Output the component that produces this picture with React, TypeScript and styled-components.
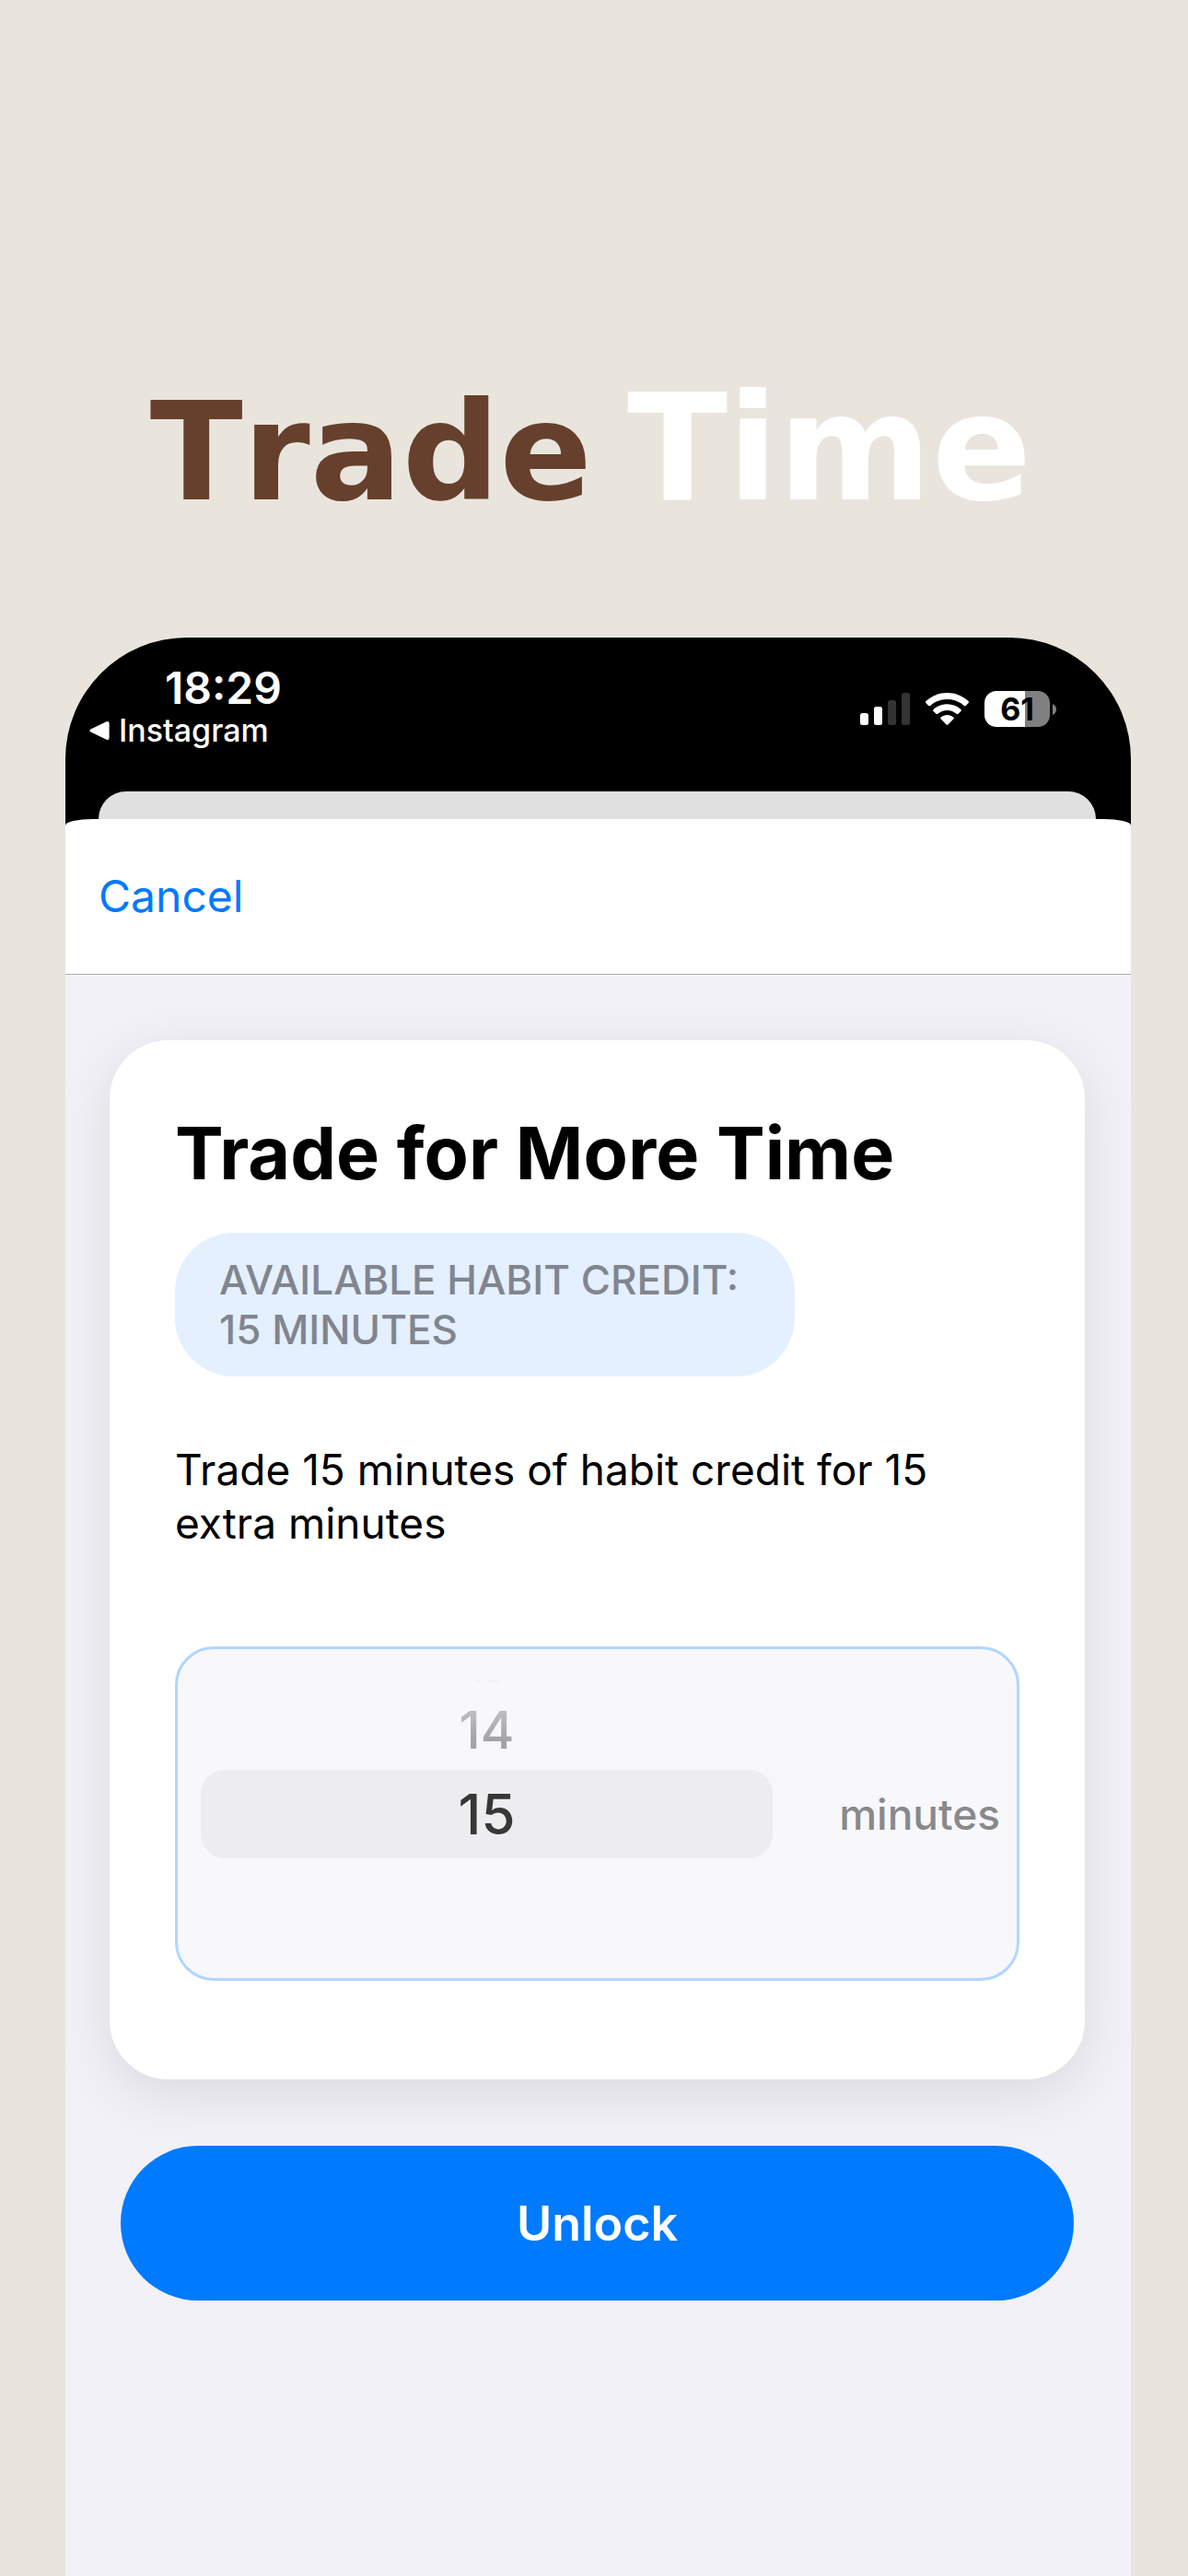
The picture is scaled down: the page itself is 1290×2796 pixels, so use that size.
import React, { useState } from 'react';
import styled, { createGlobalStyle } from 'styled-components';

const GlobalStyle = createGlobalStyle`
  *, *::before, *::after { box-sizing: border-box; }
  body { margin: 0; background: #e9e5dd; font-family: Inter, "Liberation Sans", sans-serif; }
  button, input { font: inherit; }
`;

const Page = styled.div`
  display: flex;
  flex-direction: column;
  min-height: 100vh;
  padding: 0 62px 0 71px;
  background: #e9e5dd;
`;

const Banner = styled.h1`
  display: flex;
  justify-content: center;
  align-items: baseline;
  gap: 38px;
  margin: 0;
  padding: 397px 16px 111px 0;
  font-family: "DejaVu Sans", Verdana, sans-serif;
  font-kerning: none;
  font-weight: 700;
  line-height: 180px;
`;

const BannerWord = styled.span<{ $color: string; $size: number }>`
  color: ${(p) => p.$color};
  font-size: ${(p) => p.$size}px;
`;

const Phone = styled.main`
  display: flex;
  flex-direction: column;
  flex: 1;
  overflow: hidden;
  border-radius: 132px 132px 0 0;
  background: #000;
`;

const StatusBar = styled.header`
  display: flex;
  justify-content: space-between;
  align-items: flex-start;
  height: 167px;
  padding: 27px 81px 0 26px;
  color: #fff;
`;

const Clock = styled.time`
  display: block;
  padding-left: 82px;
  font-size: 48px;
  font-weight: 600;
  line-height: 56px;
`;

const BackLink = styled.a`
  display: flex;
  align-items: center;
  gap: 10px;
  color: #fff;
  font-size: 34px;
  font-weight: 500;
  line-height: 36px;
  text-decoration: none;
`;

const StatusIcons = styled.div`
  display: flex;
  align-items: center;
  gap: 17px;
  height: 39px;
  margin-top: 31px;
`;

const BatteryWrap = styled.div`
  display: flex;
  align-items: center;
  gap: 3px;
`;

const BatteryBody = styled.span<{ $level: number }>`
  width: 71px;
  height: 39px;
  border-radius: 13px;
  background: linear-gradient(to right, #fff ${(p) => p.$level}%, #808080 ${(p) => p.$level}%);
  color: #000;
  font-size: 34px;
  font-weight: 700;
  line-height: 39px;
  text-align: center;
`;

const BackSheet = styled.div`
  height: 30px;
  margin: 0 38px 0 36px;
  border-radius: 30px 30px 0 0;
  background: #e0e0e0;
`;

const NavBar = styled.nav`
  display: flex;
  align-items: center;
  height: 169px;
  padding: 0 36px;
  border-bottom: 1px solid #a9a9ae;
  border-radius: 30px 30px 0 0 / 7px 7px 0 0;
  background: #fff;
`;

const CancelButton = styled.button`
  padding: 0;
  border: 0;
  background: none;
  color: #007aff;
  font-size: 48px;
  line-height: 60px;
  cursor: pointer;
`;

const Content = styled.section`
  display: flex;
  flex-direction: column;
  flex: 1;
  gap: 72px;
  padding: 71px 50px 72px 48px;
  background: #f2f1f7;
`;

const Card = styled.div`
  display: flex;
  flex-direction: column;
  align-items: flex-start;
  padding: 72px 71px 107px;
  border-radius: 64px;
  background: #fff;
  box-shadow: 0 15px 60px rgba(0, 0, 0, 0.1);
`;

const CardTitle = styled.h2`
  margin: 0 0 37px;
  color: #000;
  font-size: 79px;
  font-weight: 700;
  line-height: 100px;
`;

const CreditBadge = styled.p`
  max-width: 673px;
  margin: 0;
  padding: 24px 48px;
  border-radius: 64px;
  background: #e4f0ff;
  color: #81858f;
  font-size: 44px;
  font-weight: 500;
  line-height: 54px;
`;

const Summary = styled.p`
  margin: 72px 0 105px;
  color: #000;
  font-size: 46px;
  line-height: 58px;
`;

const Picker = styled.div`
  display: flex;
  align-items: center;
  align-self: stretch;
  gap: 72px;
  height: 363px;
  padding: 0 18px 0 25px;
  border: 3px solid #b0d6ff;
  border-radius: 42px;
  background: #f8f8fb;
`;

const Wheel = styled.div`
  display: grid;
  grid-template-rows: 1fr 96px 1fr;
  flex: 1;
  align-self: stretch;
  text-align: center;
`;

const WheelPast = styled.div`
  display: flex;
  flex-direction: column;
  justify-content: flex-end;
  gap: 16px;
  padding-bottom: 13px;
`;

const WheelOption = styled.label`
  display: flex;
  justify-content: center;
  align-items: center;
  font-weight: 500;
  cursor: pointer;
`;

const SelectedOption = styled(WheelOption)`
  border-radius: 26px;
  background: #ededef;
  color: #373738;
  font-size: 60px;
  line-height: 96px;
`;

const NearOption = styled(WheelOption)`
  background: linear-gradient(#bebec0 10px, #a4a4a6 40px) text;
  color: transparent;
  font-size: 56px;
  line-height: 60px;
`;

const FarOption = styled(WheelOption)`
  background: linear-gradient(#f8f8fb 30px, #ececef 35px) text;
  color: transparent;
  font-size: 40px;
  line-height: 40px;
`;

const WheelInput = styled.input`
  appearance: none;
  width: 0;
  height: 0;
  margin: 0;
  outline: none;
`;

const Unit = styled.span`
  color: #89898c;
  font-size: 46px;
  font-weight: 500;
  line-height: 58px;
`;

const UnlockButton = styled.button`
  height: 168px;
  margin: 0 12px;
  border: 0;
  border-radius: 84px;
  background: #007aff;
  color: #fff;
  font-size: 52px;
  font-weight: 600;
  cursor: pointer;
`;

const BackTriangle = () => (
  <svg width="22" height="22" viewBox="0 0 22 22" aria-hidden="true">
    <path d="M2 9.2 18.6 1.3Q21.4.3 21.6 3v16q-.2 2.700-3 1.700L2 12.800Q-1.300 11 2 9.200Z" fill="#fff" />
  </svg>
);

const SignalIcon = () => (
  <svg width="54" height="35" viewBox="0 0 54 35" role="img" aria-label="Signal">
    <rect x="0" y="22" width="9" height="13" rx="2.500" fill="#fff" />
    <rect x="15" y="15" width="9" height="20" rx="2.500" fill="#fff" />
    <rect x="30" y="8" width="9" height="27" rx="2.500" fill="#333" />
    <rect x="45" y="0" width="9" height="35" rx="2.500" fill="#333" />
  </svg>
);

const WifiIcon = () => (
  <svg width="47" height="35" viewBox="0 0 47 35" role="img" aria-label="Wi-Fi" fill="#fff">
    <path d="M23.500 0C32.500 0 40.500 3.400 46.500 9q1 1 .1 2l-2.800 2.900q-1 .9-2 0C36.900 9.400 30.500 6.900 23.500 6.900S10.100 9.400 5.200 13.900q-1 .9-2 0L.4 11q-.9-1 .1-2C6.500 3.400 14.500 0 23.500 0Z" />
    <path d="M23.500 12.200c5.700 0 10.900 2.100 14.900 5.700q1 1 0 2l-2.900 2.900q-.9.9-1.900 0c-2.700-2.400-6.200-3.800-10.100-3.800s-7.400 1.400-10.100 3.800q-1 .9-1.900 0l-2.900-2.900q-1-1 0-2c4-3.600 9.200-5.700 14.900-5.700Z" />
    <path d="M23.500 24.100c2.600 0 4.900.9 6.800 2.500q1 .9 0 1.900l-5.900 5.900q-.9.9-1.800 0l-5.900-5.900q-1-1 0-1.900c1.900-1.600 4.200-2.500 6.800-2.500Z" />
  </svg>
);

const BatteryNub = () => (
  <svg width="4" height="12" viewBox="0 0 4 12" aria-hidden="true">
    <path d="M0 0Q4 2 4 6T0 12Z" fill="#808080" />
  </svg>
);

export default function App() {
  const [minutes, setMinutes] = useState(15);

  const renderInput = (value: number) => (
    <WheelInput
      type="radio"
      name="minutes"
      value={value}
      checked={minutes === value}
      onChange={() => setMinutes(value)}
    />
  );

  return (
    <>
      <GlobalStyle />
      <Page>
        <Banner>
          <BannerWord $color="#66402c" $size={148}>Trade</BannerWord>
          <BannerWord $color="#fff" $size={160}>Time</BannerWord>
        </Banner>
        <Phone>
          <StatusBar>
            <div>
              <Clock>18:29</Clock>
              <BackLink href="#instagram">
                <BackTriangle />
                Instagram
              </BackLink>
            </div>
            <StatusIcons>
              <SignalIcon />
              <WifiIcon />
              <BatteryWrap>
                <BatteryBody $level={62}>61</BatteryBody>
                <BatteryNub />
              </BatteryWrap>
            </StatusIcons>
          </StatusBar>
          <BackSheet />
          <NavBar>
            <CancelButton type="button">Cancel</CancelButton>
          </NavBar>
          <Content>
            <Card>
              <CardTitle>Trade for More Time</CardTitle>
              <CreditBadge>AVAILABLE HABIT CREDIT: 15 MINUTES</CreditBadge>
              <Summary>Trade 15 minutes of habit credit for 15 extra minutes</Summary>
              <Picker role="radiogroup" aria-label="Minutes to trade">
                <Wheel>
                  <WheelPast>
                    <FarOption>{renderInput(13)}13</FarOption>
                    <NearOption>{renderInput(14)}14</NearOption>
                  </WheelPast>
                  <SelectedOption>{renderInput(15)}15</SelectedOption>
                </Wheel>
                <Unit>minutes</Unit>
              </Picker>
            </Card>
            <UnlockButton type="button">Unlock</UnlockButton>
          </Content>
        </Phone>
      </Page>
    </>
  );
}
